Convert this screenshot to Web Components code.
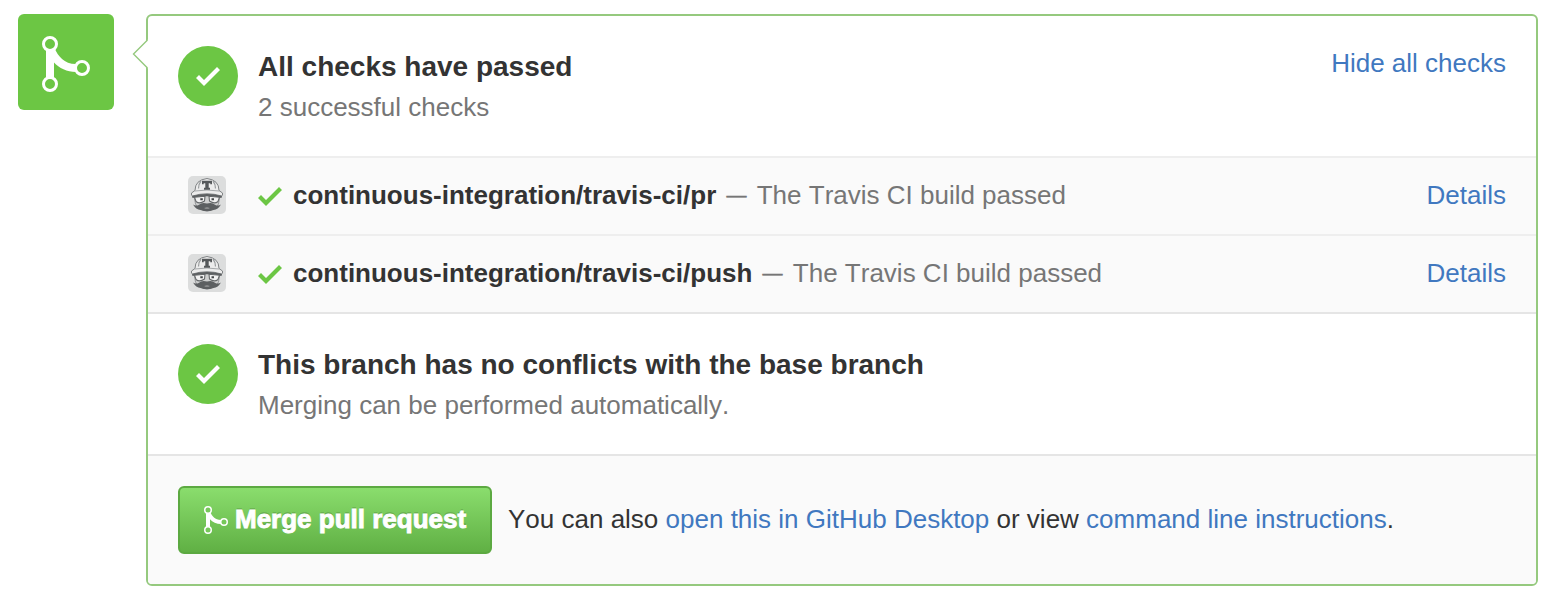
<!DOCTYPE html>
<html lang="en">
<head>
<meta charset="utf-8">
<title>Merge pull request</title>
<style>
  body { margin: 0; background: #fff; font: 26px/40px "Liberation Sans", Arial, Helvetica, sans-serif; font-kerning: none; color: #333; }
</style>
</head>
<body>
<merge-panel></merge-panel>
<script>
const define = (name, html) => {
  const template = document.createElement('template');
  template.innerHTML = html;
  customElements.define(name, class extends HTMLElement {
    constructor() {
      super();
      this.attachShadow({ mode: 'open' }).append(template.content.cloneNode(true));
    }
  });
};

define('merge-icon', `
<style>
  :host { display: block; flex: none; width: 48px; height: 56px; }
  svg { display: block; width: 100%; height: 100%; }
</style>
<svg viewBox="0 0 48 56" fill="none">
  <path fill="currentColor" d="M4 12H12.500C16 20 22 28 34 28V36C25 36 17 32 12 26.500V44H4z"/>
  <g stroke="currentColor" stroke-width="3" fill="var(--hole)">
    <circle cx="8" cy="8" r="6.500"/><circle cx="8" cy="48" r="6.500"/><circle cx="40" cy="32" r="6.500"/>
  </g>
</svg>`);

define('check-icon', `
<style>
  :host { display: block; flex: none; width: 24px; height: 19px; }
  svg { display: block; }
</style>
<svg width="24" height="19" viewBox="0 0 24 19"><path fill="currentColor" d="M24 3L8 19 0 11 3 8 8 13 21 0z"/></svg>`);

define('travis-avatar', `
<style>
  :host { display: block; flex: none; width: 38px; height: 38px; }
  svg { display: block; }
</style>
<svg width="38" height="38" viewBox="0 0 38 38">
  <rect width="38" height="38" rx="5" fill="#dcdddd"/>
  <path d="M6 19L7.500 28Q11 34 19 35Q27 34 30.500 28L32 19z" fill="#cfd0d0" stroke="#85888a" stroke-width=".8"/>
  <path d="M7 14.500Q7 4 19 2.500Q31 4 31 14.500L34.500 17Q35 19.500 33.500 20Q19 15.500 4.500 20Q3 19.500 3.500 17z" fill="#ececec" stroke="#808385" stroke-width="1"/>
  <path d="M10.500 12.500Q10.500 8 13 5M27.500 12.500Q27.500 8 25 5" fill="none" stroke="#999c9e" stroke-width="1.200"/>
  <path d="M7 15Q19 13 31 15" fill="none" stroke="#a5a8aa" stroke-width="1"/>
  <path d="M14 4.800H24V8.300H22.300V7.300H20.700V11.800H22V13.800H16V11.800H17.300V7.300H15.700V8.300H14z" fill="#55585a"/>
  <path d="M4 20Q19 16.200 34 20L33.500 22Q19 18.700 4.500 22z" fill="#5c5f61"/>
  <path d="M6.500 21.200L17 20.200 16.500 25Q11.500 28.500 8 25.500zM21 20.200L31.500 21.200 30 25.500Q26.500 28.500 21.500 25z" fill="#f2f2f2" stroke="#65686a" stroke-width="1.100"/>
  <path d="M12.300 22.300h2.500v2h-2.500zM23.500 22.300h2.500v2h-2.500z" fill="#45484a"/>
  <path d="M19 27.500Q14 26 11 28.700Q8 30.500 5 28.500Q8 33.500 12.500 34Q19 36.500 25.500 34Q30 33.500 33 28.500Q30 30.500 27 28.700Q24 26 19 27.500z" fill="#5c5f61"/>
  <path d="M16 32Q19 30.800 22 32Q19 33.200 16 32z" fill="#b5b6b6"/>
</svg>`);

define('text-link', `
<style>
  :host { display: inline; color: #4078c0; white-space: nowrap; }
  a { color: inherit; text-decoration: none; cursor: pointer; }
</style>
<a><slot></slot></a>`);

define('status-section', `
<style>
  :host { display: flex; box-sizing: border-box; height: 140px; padding: 30px; }
  .badge { flex: none; display: grid; place-items: center; width: 60px; height: 60px; border-radius: 50%; background: #6cc644; color: #fff; }
  check-icon { margin-top: 1px; }
  .copy { flex: 1; margin-left: 20px; white-space: nowrap; }
  .title { height: 41px; font-size: 28px; font-weight: bold; line-height: 42px; }
  .note { color: #767676; }
  .action { margin-top: -3px; }
</style>
<div class="badge"><check-icon></check-icon></div>
<div class="copy"><div class="title"><slot name="title"></slot></div><div class="note"><slot></slot></div></div>
<div class="action"><slot name="action"></slot></div>`);

define('check-row', `
<style>
  :host { display: flex; align-items: center; box-sizing: border-box; height: 78px; padding: 0 30px 2px 40px; border-top: 2px solid #eee; background: #fafafa; }
  check-icon { margin: 2px 11px 0 32px; color: #6cc644; }
  .text { flex: 1; white-space: nowrap; color: #767676; }
  .name { color: #333; font-weight: bold; margin-right: 3px; }
  .dash { font-size: 20px; line-height: 20px; vertical-align: 2px; margin-right: 3px; -webkit-text-stroke: .5px #767676; }
</style>
<travis-avatar></travis-avatar><check-icon></check-icon>
<div class="text"><span class="name"><slot name="name"></slot></span> <span class="dash">—</span> <slot></slot></div>
<text-link>Details</text-link>`);

define('merge-button', `
<style>
  :host { display: block; flex: none; }
  button { display: flex; align-items: center; box-sizing: border-box; width: 314px; height: 68px; margin: 0; padding: 0 0 0 24px; border: 2px solid #5ca941; border-radius: 6px; background: linear-gradient(#8add6d, #60b044); color: #fff; font: bold 26px/40px "Liberation Sans", Arial, Helvetica, sans-serif; white-space: nowrap; text-shadow: 0 -2px 0 rgba(0,0,0,.15); -webkit-text-stroke: .9px #fff; }
  merge-icon { width: 24px; height: 28px; margin-right: 7px; --hole: #76c859; }
  .label { padding-bottom: 2px; }
</style>
<button><merge-icon></merge-icon><span class="label"><slot></slot></span></button>`);

define('merge-panel', `
<style>
  :host { display: flex; align-items: flex-start; box-sizing: border-box; width: 1554px; height: 600px; padding: 14px 16px 14px 18px; }
  .state { flex: none; display: grid; place-items: center; width: 96px; height: 96px; margin-right: 32px; border-radius: 6px; background: #6cc644; color: #fff; --hole: #6cc644; }
  .state merge-icon { margin-top: 4px; }
  .box { position: relative; flex: 1; box-sizing: border-box; height: 572px; border: 2px solid #95c97e; border-radius: 6px; }
  .caret { position: absolute; left: -16px; top: 23px; }
  .conflicts { border-top: 2px solid #e5e5e5; }
  .footer { display: flex; align-items: center; box-sizing: border-box; height: 130px; padding: 0 30px; border-top: 2px solid #e5e5e5; border-radius: 0 0 4px 4px; background: #fafafa; white-space: nowrap; }
  .footer p { margin: -2px 0 0 16px; }
</style>
<div class="state"><merge-icon></merge-icon></div>
<div class="box">
  <svg class="caret" width="17" height="30" viewBox="0 0 17 30"><path d="M17 0.500H16L1.500 15 16 29.500H17z" fill="#fff"/><path d="M15.500 1L1.500 15l14 14" fill="none" stroke="#95c97e" stroke-width="1.400"/></svg>
  <status-section>
    <span slot="title">All checks have passed</span>2 successful checks<text-link slot="action">Hide all checks</text-link>
  </status-section>
  <check-row><span slot="name">continuous-integration/travis-ci/pr</span>The Travis CI build passed</check-row>
  <check-row><span slot="name">continuous-integration/travis-ci/push</span>The Travis CI build passed</check-row>
  <div class="conflicts"><status-section><span slot="title">This branch has no conflicts with the base branch</span>Merging can be performed automatically.</status-section></div>
  <div class="footer">
    <merge-button>Merge pull request</merge-button>
    <p>You can also <text-link>open this in GitHub Desktop</text-link> or view <text-link>command line instructions</text-link>.</p>
  </div>
</div>`);
</script>
</body>
</html>
